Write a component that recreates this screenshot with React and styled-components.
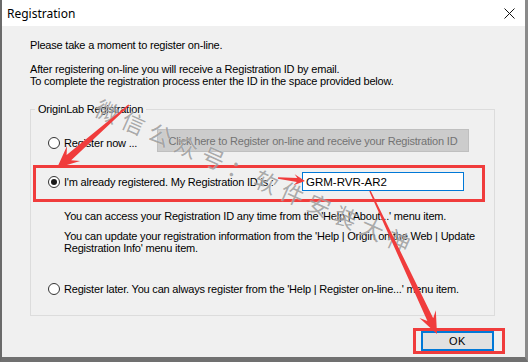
import React from 'react';
import styled, { createGlobalStyle } from 'styled-components';

const GlobalStyle = createGlobalStyle`
  html, body {
    margin: 0;
    padding: 0;
    background: #ffffff;
  }
  body {
    font-family: 'Liberation Sans', Arial, sans-serif;
  }
`;

const Window = styled.div`
  position: relative;
  box-sizing: border-box;
  width: 528px;
  height: 362px;
  background: #f0f0f0;
  border-left: 2px solid #6a6a6a;
  border-right: 3px solid #8a8a8a;
  border-bottom: 5px solid #707070;
  display: flex;
  flex-direction: column;
  overflow: hidden;
`;

const TitleBar = styled.div`
  height: 26px;
  flex: none;
  background: #ffffff;
  display: flex;
  align-items: center;
  justify-content: space-between;
  padding: 0 10px 0 5px;
  font-family: 'Noto Sans', sans-serif;
  font-size: 12px;
  color: #000000;
`;

const Body = styled.div`
  flex: 1;
  padding: 13px 20px 0 28px;
  font-size: 11px;
  line-height: 12px;
  letter-spacing: -0.2px;
  color: #000000;
`;

const Line = styled.div`
  margin-top: ${(p) => p.$gap || 0}px;
  padding-left: ${(p) => p.$indent || 0}px;
  white-space: nowrap;
`;

const Group = styled.fieldset`
  margin: 16px 10px 0 0;
  padding: 0 0 20px;
  border: 1px solid #dcdcdc;
  min-width: 0;
`;

const Legend = styled.legend`
  margin-left: 4px;
  padding: 0 3px;
`;

const OptionRow = styled.div`
  display: grid;
  grid-template-columns: ${(p) => p.$cols};
  align-items: start;
  margin-top: ${(p) => p.$gap || 0}px;
  padding-left: 17px;
`;

const Highlight = styled.div`
  margin: 13px 9px 0 2px;
  border: 3px solid #f03c3c;
  padding: 4px 0 8px 12px;
  display: grid;
  grid-template-columns: 254px 162px;
  align-items: center;
`;

const RadioLabel = styled.label`
  display: flex;
  align-items: center;
  gap: 4px;
  height: 12px;
  margin-top: ${(p) => p.$top || 0}px;
  white-space: nowrap;
`;

const Circle = styled.span`
  box-sizing: border-box;
  flex: none;
  width: 12px;
  height: 12px;
  border-radius: 50%;
  border: 1px solid #333333;
  background: #ffffff;
  display: flex;
  align-items: center;
  justify-content: center;
  &::after {
    content: '';
    display: ${(p) => (p.$checked ? 'block' : 'none')};
    width: 6px;
    height: 6px;
    border-radius: 50%;
    background: #1a1a1a;
  }
`;

const DisabledButton = styled.div`
  box-sizing: border-box;
  height: 23px;
  width: 312px;
  background: #cccccc;
  border: 1px solid #bfbfbf;
  color: #737373;
  display: flex;
  align-items: center;
  justify-content: center;
  white-space: nowrap;
`;

const IdInput = styled.div`
  box-sizing: border-box;
  height: 19px;
  width: 162px;
  background: #ffffff;
  border: 1px solid #0078d7;
  padding-left: 3px;
  display: flex;
  align-items: center;
  font-size: 11.5px;
  letter-spacing: 0;
`;

const Footer = styled.div`
  display: flex;
  justify-content: flex-end;
  margin-top: 12px;
`;

const OkFrame = styled.div`
  border: 3px solid #f03c3c;
  padding: 0 8px 0 5px;
  display: flex;
`;

const OkButton = styled.div`
  box-sizing: border-box;
  width: 73px;
  height: 20px;
  background: #e1e1e1;
  border: 2px solid #0078d7;
  display: flex;
  align-items: center;
  justify-content: center;
  letter-spacing: 0.5px;
`;

const Overlay = styled.svg`
  position: absolute;
  left: -2px;
  top: 0;
  pointer-events: none;
`;

const Watermark = styled.div`
  position: absolute;
  left: 102px;
  top: 90px;
  transform: rotate(24deg);
  transform-origin: left top;
  font-family: 'Noto Sans CJK SC', sans-serif;
  font-size: 23px;
  letter-spacing: 6px;
  white-space: nowrap;
  color: rgba(100, 100, 100, 0.55);
  text-shadow: 0 0 1px rgba(255, 255, 255, 0.8);
  pointer-events: none;
`;

// polygon for a tapered annotation arrow, tail (x1,y1) to tip (x2,y2)
function arrow(x1, y1, x2, y2, head, half, tail, neck) {
  const dx = x2 - x1;
  const dy = y2 - y1;
  const len = Math.hypot(dx, dy);
  const ux = dx / len;
  const uy = dy / len;
  const nx = -uy;
  const ny = ux;
  const wx = x2 - ux * head;
  const wy = y2 - uy * head;
  const kx = x2 - ux * head * 0.72;
  const ky = y2 - uy * head * 0.72;
  const pts = [
    [x1 + nx * tail, y1 + ny * tail],
    [kx + nx * neck, ky + ny * neck],
    [wx + nx * half, wy + ny * half],
    [x2, y2],
    [wx - nx * half, wy - ny * half],
    [kx - nx * neck, ky - ny * neck],
    [x1 - nx * tail, y1 - ny * tail],
  ];
  return pts.map((p) => p.map((v) => v.toFixed(1)).join(',')).join(' ');
}

const CloseIcon = () => (
  <svg width="11" height="11" viewBox="0 0 11 11">
    <path d="M0.5 0.5 L10.5 10.5 M10.5 0.5 L0.5 10.5" stroke="#111" strokeWidth="1" />
  </svg>
);

const Radio = ({ checked, top, children }) => (
  <RadioLabel $top={top}>
    <Circle $checked={checked} />
    <span>{children}</span>
  </RadioLabel>
);

export default function App() {
  return (
    <>
      <GlobalStyle />
      <Window>
        <TitleBar>
          <span>Registration</span>
          <CloseIcon />
        </TitleBar>
        <Body>
          <Line>Please take a moment to register on-line.</Line>
          <Line $gap={12}>After registering on-line you will receive a Registration ID by email.</Line>
          <Line>To complete the registration process enter the ID in the space provided below.</Line>

          <Group>
            <Legend>OriginLab Registration</Legend>
            <OptionRow $cols="109px 312px" $gap={14}>
              <Radio top={8}>Register now ...</Radio>
              <DisabledButton>Click here to Register on-line and receive your Registration ID</DisabledButton>
            </OptionRow>

            <Highlight>
              <Radio checked>I'm already registered. My Registration ID is :</Radio>
              <IdInput>GRM-RVR-AR2</IdInput>
            </Highlight>

            <Line $gap={8} $indent={33}>
              You can access your Registration ID any time from the 'Help | About...' menu item.
            </Line>
            <Line $gap={8} $indent={33}>
              You can update your registration information from the 'Help | Origin on the Web | Update
              <br />
              Registration Info' menu item.
            </Line>

            <OptionRow $cols="auto" $gap={29}>
              <Radio>Register later. You can always register from the 'Help | Register on-line...' menu item.</Radio>
            </OptionRow>
          </Group>

          <Footer>
            <OkFrame>
              <OkButton>OK</OkButton>
            </OkFrame>
          </Footer>
        </Body>

        <Watermark>微信公众号：软件安装大神</Watermark>

        <Overlay width="528" height="362" viewBox="0 0 528 362">
          <polygon points={arrow(129, 105, 57, 168, 22, 10, 0.8, 3.5)} fill="#f03c3c" />
          <polygon points={arrow(278, 178, 305, 181, 11, 5.5, 0.8, 2)} fill="#f03c3c" />
          <polygon points={arrow(370, 191, 437, 334, 22, 9, 0.8, 3.2)} fill="#f03c3c" />
        </Overlay>
      </Window>
    </>
  );
}
